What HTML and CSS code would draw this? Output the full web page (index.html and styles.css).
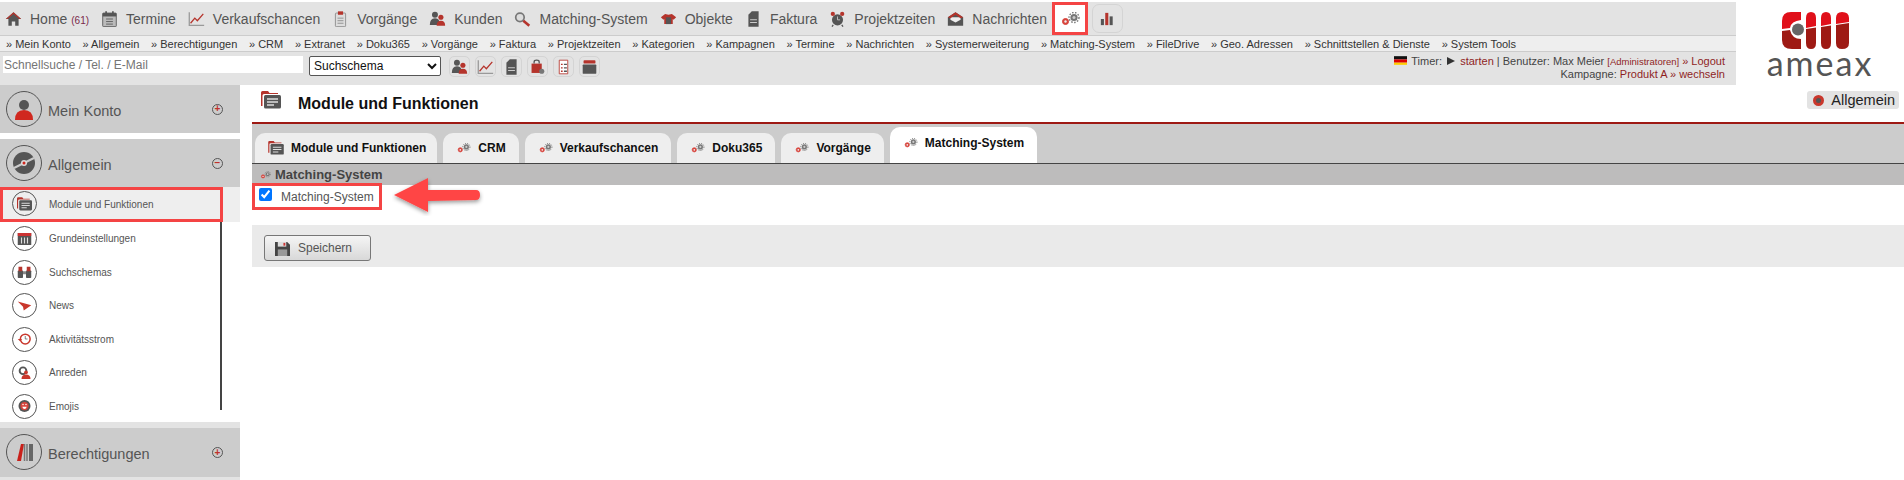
FILE: index.html
```html
<!DOCTYPE html>
<html>
<head>
    <title>Module und Funktionen</title>
    <meta charset="utf-8"/>
    <link rel="stylesheet" href="styles.css">
</head>
<body>
    <svg class="defs" width="0" height="0">
        <symbol id="gears" viewBox="0 0 20 14">
            <circle cx="5.5" cy="9.500" r="3" fill="#d8443c" stroke="#d8443c" stroke-width="1"/>
            <circle cx="5.5" cy="9.500" r="1.200" fill="#eee"/>
            <circle cx="14" cy="5.5" r="3.600" fill="#777"/>
            <circle cx="14" cy="5.5" r="5" fill="none" stroke="#777" stroke-width="1.400" stroke-dasharray="1.500 1.500"/>
            <circle cx="14" cy="5.5" r="1.500" fill="#ccc"/>
        </symbol>
        <symbol id="folder" viewBox="0 0 20 18">
            <path d="M0 3V1.500Q0 0 1.500 0H7L8.500 2H17V3H3Q1.500 3 1.500 4.500V15H0Z" fill="#b5342c"/>
            <rect x="3" y="4" width="17" height="13.500" rx="1.500" fill="#555"/>
            <path d="M6 8H17M6 11H17M6 14H13" stroke="#ddd" stroke-width="1.300"/>
        </symbol>
        <symbol id="people" viewBox="0 0 20 18">
            <circle cx="7" cy="4" r="3.500" fill="#555"/>
            <path d="M1 16Q1 8 7 8Q11 8 12 11V16Z" fill="#555"/>
            <circle cx="14" cy="7" r="3" fill="#b5342c"/>
            <path d="M9 17Q9 11 14 11Q19 11 19 17Z" fill="#b5342c"/>
        </symbol>
        <symbol id="chart" viewBox="0 0 20 18">
            <path d="M1.500 1V16.500H19" fill="none" stroke="#999" stroke-width="1.500"/>
            <path d="M3 14L8 8L11 11L18 3" fill="none" stroke="#b5342c" stroke-width="1.500"/>
        </symbol>
        <symbol id="invoice" viewBox="0 0 20 18">
            <path d="M4 4L8 0H16V18H4Z" fill="#555"/>
            <path d="M6 10H14M6 13H14" stroke="#ccc" stroke-width="1.200"/>
        </symbol>
        <symbol id="bag" viewBox="0 0 20 18">
            <path d="M3 5H15V16H3Z" fill="#b5342c"/>
            <path d="M6 5V3Q6 1 9 1Q12 1 12 3V5" fill="none" stroke="#555" stroke-width="1.500"/>
            <circle cx="15" cy="14" r="3" fill="#777"/>
        </symbol>
        <symbol id="doc" viewBox="0 0 20 18">
            <path d="M5 1H15V17H5Z" fill="#fff" stroke="#b5342c"/>
            <path d="M7 6H9M7 10H9M7 14H9" stroke="#b5342c" stroke-width="1.500"/>
            <path d="M10.500 6H14M10.500 10H14M10.500 14H14" stroke="#555" stroke-width="1.500"/>
        </symbol>
        <symbol id="box" viewBox="0 0 20 18">
            <rect x="3" y="1" width="14" height="4" rx="1" fill="#b5342c"/>
            <rect x="2" y="6" width="16" height="11" rx="1" fill="#555"/>
        </symbol>
        <symbol id="save" viewBox="0 0 16 16">
            <path d="M0 1H13L16 4V16H0Z" fill="#444"/>
            <rect x="3" y="1" width="9" height="5" fill="#ddd"/>
            <rect x="9" y="2" width="2" height="3" fill="#c33"/>
            <rect x="3" y="9" width="10" height="7" fill="#999"/>
        </symbol>
    </svg>

    <div class="top">
        <div class="top-left">
            <nav class="main-nav">
                <a class="nav-item">
                    <svg class="nav-icon" viewBox="0 0 20 18"><path d="M10 1L1 9H4V17H8V12H12V17H16V9H19Z" fill="#555"/><path d="M10 1L1 9H3L10 3L17 9H19Z" fill="#b5342c"/></svg>
                    <span>Home <small class="count">(61)</small></span>
                </a>
                <a class="nav-item">
                    <svg class="nav-icon" viewBox="0 0 20 18"><rect x="2" y="2" width="16" height="16" rx="1" fill="#bbb" stroke="#555"/><rect x="2" y="2" width="16" height="4" fill="#555"/><path d="M6 0V4M14 0V4" stroke="#555" stroke-width="2"/><path d="M6 9H14M6 12H14M6 15H14" stroke="#555"/></svg>
                    <span>Termine</span>
                </a>
                <a class="nav-item"><svg class="nav-icon"><use href="#chart"/></svg> <span>Verkaufschancen</span></a>
                <a class="nav-item">
                    <svg class="nav-icon" viewBox="0 0 20 18"><rect x="4" y="2" width="12" height="16" rx="1" fill="#ddd" stroke="#888"/><rect x="7" y="0" width="6" height="4" fill="#b5342c"/><path d="M6.500 8H13.500M6.500 11H13.500M6.500 14H13.500" stroke="#888"/></svg>
                    <span>Vorgänge</span>
                </a>
                <a class="nav-item"><svg class="nav-icon"><use href="#people"/></svg> <span>Kunden</span></a>
                <a class="nav-item">
                    <svg class="nav-icon" viewBox="0 0 20 18"><circle cx="7" cy="7" r="5" fill="#ddd" stroke="#777" stroke-width="2"/><path d="M11 11L18 17" stroke="#b5342c" stroke-width="3"/></svg>
                    <span>Matching-System</span>
                </a>
                <a class="nav-item">
                    <svg class="nav-icon" viewBox="0 0 20 18"><path d="M6 3L10 4L14 3L19 7L16 10L15 9V15H5V9L4 10L1 7Z" fill="#b5342c"/><path d="M7 7H13V15H7Z" fill="#555"/></svg>
                    <span>Objekte</span>
                </a>
                <a class="nav-item"><svg class="nav-icon"><use href="#invoice"/></svg> <span>Faktura</span></a>
                <a class="nav-item">
                    <svg class="nav-icon" viewBox="0 0 20 18"><circle cx="10" cy="10" r="6.500" fill="#555"/><circle cx="4.500" cy="3" r="2.500" fill="#b5342c"/><circle cx="15.500" cy="3" r="2.500" fill="#b5342c"/><path d="M5 16L3.500 18M15 16L16.500 18" stroke="#555" stroke-width="1.500"/><path d="M10 6V10H13" stroke="#ccc" fill="none"/></svg>
                    <span>Projektzeiten</span>
                </a>
                <a class="nav-item">
                    <svg class="nav-icon" viewBox="0 0 20 18"><path d="M1 7L10 1L19 7V17H1Z" fill="#555"/><path d="M4 7H16V10L10 13L4 10Z" fill="#eee"/><path d="M1 7L10 1L19 7L16 8L10 4L4 8Z" fill="#b5342c"/></svg>
                    <span>Nachrichten</span>
                </a>
                <a class="nav-button active"><svg class="gears-icon"><use href="#gears"/></svg></a>
                <a class="nav-button">
                    <svg class="gears-icon" viewBox="0 0 20 16"><rect x="3" y="8" width="3.500" height="7" fill="#555"/><rect x="8" y="1" width="3.500" height="14" fill="#b5342c"/><rect x="13" y="5" width="3.500" height="10" fill="#555"/></svg>
                </a>
            </nav>
            <nav class="sub-nav">
                <a>» Mein Konto</a>
                <a>» Allgemein</a>
                <a>» Berechtigungen</a>
                <a>» CRM</a>
                <a>» Extranet</a>
                <a>» Doku365</a>
                <a>» Vorgänge</a>
                <a>» Faktura</a>
                <a>» Projektzeiten</a>
                <a>» Kategorien</a>
                <a>» Kampagnen</a>
                <a>» Termine</a>
                <a>» Nachrichten</a>
                <a>» Systemerweiterung</a>
                <a>» Matching-System</a>
                <a>» FileDrive</a>
                <a>» Geo. Adressen</a>
                <a>» Schnittstellen &amp; Dienste</a>
                <a>» System Tools</a>
            </nav>
            <div class="tools">
                <input class="quick-search" type="text" placeholder="Schnellsuche / Tel. / E-Mail">
                <select class="schema">
                    <option>Suchschema</option>
                </select>
                <a class="tool-button"><svg><use href="#people"/></svg></a>
                <a class="tool-button"><svg><use href="#chart"/></svg></a>
                <a class="tool-button"><svg><use href="#invoice"/></svg></a>
                <a class="tool-button"><svg><use href="#bag"/></svg></a>
                <a class="tool-button"><svg><use href="#doc"/></svg></a>
                <a class="tool-button"><svg><use href="#box"/></svg></a>
                <div class="user-info">
                    <div>
                        <svg class="flag" viewBox="0 0 12 8"><rect width="12" height="3" fill="#111"/><rect y="3" width="12" height="3" fill="#d00"/><rect y="6" width="12" height="2" fill="#fc0"/></svg>
                        Timer: <span class="play"></span> <a>starten</a> | Benutzer: Max Meier <a class="role">[Administratoren]</a> <a>» Logout</a>
                    </div>
                    <div>Kampagne: <a>Produkt A</a> <a>» wechseln</a></div>
                </div>
            </div>
        </div>
        <div class="logo">
            <svg class="logo-mark" viewBox="0 0 67 37">
                <path d="M19 0H9Q0 0 0 9V17L8 16Q9 9 19 8Z" fill="#e0101a"/>
                <path d="M0 19L8 18Q10 27 19 27V37H10Q0 37 0 28Z" fill="#9e1a14"/>
                <circle cx="16" cy="17.500" r="6" fill="#666"/>
                <path d="M24 6Q24 0 29 0Q34 0 34 6V14L24 16Z" fill="#e0101a"/>
                <path d="M24 17L34 15.500V31Q34 37 29 37Q24 37 24 31Z" fill="#9e1a14"/>
                <path d="M39 6Q39 0 44 0Q49 0 49 6V12L39 14Z" fill="#e0101a"/>
                <path d="M39 15L49 13.500V31Q49 37 44 37Q39 37 39 31Z" fill="#9e1a14"/>
                <path d="M54 6Q54 0 60 0Q67 0 67 6V10L54 12Z" fill="#e0101a"/>
                <path d="M54 13L67 11V31Q67 37 60 37Q54 37 54 31Z" fill="#9e1a14"/>
            </svg>
            <div class="logo-text">ameax</div>
        </div>
    </div>

    <div class="page">
        <aside class="sidebar">
            <div class="side-head">
                <span class="head-circle">
                    <svg viewBox="0 0 24 24"><circle cx="12" cy="8" r="5" fill="#555"/><path d="M3 23Q3 13 12 13Q21 13 21 23Z" fill="#d0281f"/></svg>
                </span>
                Mein Konto
                <span class="toggle">+</span>
            </div>
            <div class="side-head open">
                <span class="head-circle">
                    <svg viewBox="0 0 24 24"><circle cx="12" cy="12" r="11" fill="#555"/><path d="M2 17L22 7" stroke="#ccc" stroke-width="2"/><circle cx="12" cy="12" r="3" fill="#ddd"/><circle cx="12" cy="12" r="1.500" fill="#d0281f"/></svg>
                </span>
                Allgemein
                <span class="toggle">−</span>
            </div>
            <ul class="side-list">
                <li class="active">
                    <span class="item-circle"><svg><use href="#folder"/></svg></span>
                    Module und Funktionen
                </li>
                <li>
                    <span class="item-circle">
                        <svg viewBox="0 0 20 18"><rect x="1" y="1" width="18" height="16" fill="#555"/><rect x="1" y="1" width="18" height="4" fill="#c33"/><path d="M6 7V15M10 7V15M14 7V15" stroke="#ddd" stroke-width="1.500"/></svg>
                    </span>
                    Grundeinstellungen
                </li>
                <li>
                    <span class="item-circle">
                        <svg viewBox="0 0 20 18"><rect x="1" y="7" width="7" height="10" rx="1" fill="#555"/><rect x="12" y="7" width="7" height="10" rx="1" fill="#555"/><rect x="2" y="2" width="5" height="6" fill="#b5342c"/><rect x="13" y="2" width="5" height="6" fill="#b5342c"/><rect x="8" y="8" width="4" height="4" fill="#888"/></svg>
                    </span>
                    Suchschemas
                </li>
                <li>
                    <span class="item-circle">
                        <svg viewBox="0 0 20 18"><path d="M1 3L19 8L9 15L8 10Z" fill="#c9372c"/></svg>
                    </span>
                    News
                </li>
                <li>
                    <span class="item-circle">
                        <svg viewBox="0 0 20 18"><circle cx="11" cy="9" r="6.500" fill="none" stroke="#c9372c" stroke-width="2"/><path d="M11 5V9H14" stroke="#555" fill="none"/><path d="M1 9H7L4 12Z" fill="#c9372c"/></svg>
                    </span>
                    Aktivitätsstrom
                </li>
                <li>
                    <span class="item-circle">
                        <svg viewBox="0 0 20 18"><circle cx="8" cy="6" r="4.500" fill="none" stroke="#555" stroke-width="2.500"/><circle cx="12" cy="8" r="2.500" fill="#c9372c"/><path d="M6 17Q6 11 12 11Q18 11 18 17Z" fill="#c9372c"/></svg>
                    </span>
                    Anreden
                </li>
                <li>
                    <span class="item-circle">
                        <svg viewBox="0 0 20 18"><circle cx="10" cy="9" r="8" fill="#555"/><circle cx="10" cy="9" r="5.500" fill="#d8443c"/><path d="M7 10H13Q12 13 10 13Q8 13 7 10Z" fill="#fff"/><circle cx="8" cy="7" r="1" fill="#fff"/><circle cx="12" cy="7" r="1" fill="#fff"/></svg>
                    </span>
                    Emojis
                </li>
            </ul>
            <div class="side-head last">
                <span class="head-circle">
                    <svg viewBox="0 0 24 24"><path d="M5 21L9 4H12L9 21Z" fill="#c9201a"/><path d="M12.500 4V21M15 4V21" stroke="#777" stroke-width="1.500"/><rect x="17" y="4" width="4" height="17" fill="#666"/></svg>
                </span>
                Berechtigungen
                <span class="toggle">+</span>
            </div>
        </aside>

        <main class="content">
            <span class="area-badge"><span class="badge-dot"></span>Allgemein</span>
            <header class="title-bar">
                <svg class="title-icon"><use href="#folder"/></svg>
                <h1>Module und Funktionen</h1>
            </header>
            <div class="tabs">
                <a class="tab"><svg class="tab-folder"><use href="#folder"/></svg> Module und Funktionen</a>
                <a class="tab"><svg class="tab-icon"><use href="#gears"/></svg> CRM</a>
                <a class="tab"><svg class="tab-icon"><use href="#gears"/></svg> Verkaufschancen</a>
                <a class="tab"><svg class="tab-icon"><use href="#gears"/></svg> Doku365</a>
                <a class="tab"><svg class="tab-icon"><use href="#gears"/></svg> Vorgänge</a>
                <a class="tab current"><svg class="tab-icon"><use href="#gears"/></svg> Matching-System</a>
            </div>
            <h2 class="section-head"><svg class="section-icon"><use href="#gears"/></svg> Matching-System</h2>
            <div class="option-row">
                <label class="option">
                    <input type="checkbox" checked>
                    Matching-System
                </label>
            </div>
            <div class="save-bar">
                <button class="save"><svg><use href="#save"/></svg> Speichern</button>
            </div>
            <svg class="arrow" viewBox="0 0 92 40">
                <defs><filter id="shadow"><feDropShadow dx="0" dy="2" stdDeviation="2" flood-opacity="0.4"/></filter></defs>
                <path d="M2 18L36 1V13H84Q88 13 88 18Q88 23 84 23L36 24V35Z" fill="#ff4444" filter="url(#shadow)"/>
            </svg>
        </main>
    </div>
</body>
</html>
```

FILE: styles.css
```css
* {
    margin: 0;
    padding: 0;
    box-sizing: border-box;
}

html {
    width: 100%;
}

body {
    width: 100%;
    height: 480px;
    overflow: hidden;

    background-color: white;
    color: #444;
    font-family: 'Liberation Sans', Arial, sans-serif;
}

a {
    color: inherit;
}

.defs {
    position: absolute;
}

/* top */

.top {
    height: 85px;
    padding-top: 2px;

    display: flex;
}

.top-left {
    width: 1736px;

    background-color: #e3e3e3;
}

.main-nav {
    height: 33px;
    padding-left: 5px;

    display: flex;
    align-items: center;
    gap: 12px;

    color: #555;
    font-size: 14px;
}

.nav-item {
    display: flex;
    align-items: center;
    gap: 8px;
    white-space: nowrap;
}

.nav-item .count {
    color: #7a2a4a;
    font-size: 10px;
}

.nav-icon {
    width: 17px;
    height: 16px;
}

.nav-button {
    width: 31px;
    height: 29px;
    margin-left: -8px;

    display: flex;
    justify-content: center;
    align-items: center;

    border: 1px solid #d4d4d4;
    border-radius: 7px;
}

.nav-button.active {
    width: 36px;
    height: 33px;
    margin-left: -7px;

    background-color: white;
    border: 3px solid #f44444;
    border-radius: 0;
}

.gears-icon {
    width: 20px;
    height: 14px;
}

.sub-nav {
    height: 17px;
    padding-left: 6px;

    display: flex;
    align-items: center;
    gap: 11.700px;

    background-color: #eeeeee;
    border-top: 1px solid #cccccc;
    border-bottom: 1px solid #cccccc;

    color: #333;
    font-size: 11px;
    white-space: nowrap;
}

.tools {
    padding: 4px 11px 0 3px;

    display: flex;
    align-items: flex-start;
}

.quick-search {
    width: 300px;
    height: 17px;
    padding-left: 1px;

    background-color: white;
    border: none;

    font-family: inherit;
    font-size: 12px;
}

.schema {
    width: 132px;
    height: 20px;
    margin: 0 8px 0 6px;

    background-color: white;
    border: 1px solid #555;
    border-radius: 2px;

    color: #111;
    font-family: inherit;
    font-size: 12px;
}

.tool-button {
    width: 21px;
    height: 21px;
    margin-right: 5px;

    display: flex;
    justify-content: center;
    align-items: center;

    border: 1px solid #d4d4d4;
    border-radius: 5px;
}

.tool-button svg {
    width: 17px;
    height: 16px;
}

.user-info {
    margin-left: auto;
    margin-top: -1px;

    color: #444;
    font-size: 11px;
    line-height: 12px;
    text-align: right;
}

.user-info a {
    color: #8f1f1f;
}

.user-info .role {
    font-size: 9.500px;
}

.flag {
    width: 13px;
    height: 9px;
    margin-right: 1px;
}

.play {
    width: 0;
    height: 0;
    margin: 0 2px;

    display: inline-block;

    border-left: 8px solid #333;
    border-top: 4px solid transparent;
    border-bottom: 4px solid transparent;
}

.logo {
    width: 168px;
    padding-top: 10px;

    display: flex;
    flex-direction: column;
    align-items: center;
}

.logo-mark {
    width: 67px;
    height: 37px;
    margin-left: -9px;
}

.logo-text {
    color: #555;
    font-family: 'Lato', sans-serif;
    font-size: 34px;
    line-height: 28px;
    letter-spacing: 2px;
}

/* sidebar */

.page {
    display: flex;
}

.sidebar {
    width: 240px;
    flex-shrink: 0;
}

.side-head {
    height: 48px;
    padding: 3px 14px 0 48px;

    display: flex;
    align-items: center;

    background-color: #cccccc;
    position: relative;

    color: #555;
    font-size: 14.500px;
}

.side-head.open {
    margin-top: 6px;
}

.side-head.last {
    height: 49px;
    margin-top: 18px;

    box-shadow: 0 -6px 0 #e3e3e3, 0 6px 0 #e3e3e3;
}

.head-circle {
    width: 36px;
    height: 36px;

    display: flex;
    justify-content: center;
    align-items: center;

    position: absolute;
    left: 6px;
    top: 6px;

    border: 1px solid #555;
    border-radius: 50%;
}

.head-circle svg {
    width: 24px;
    height: 24px;
}

.toggle {
    width: 11px;
    height: 11px;
    margin-left: auto;
    margin-right: 3px;
    margin-top: -3px;

    display: flex;
    justify-content: center;
    align-items: center;

    border: 1.500px solid #555;
    border-radius: 50%;

    color: #c0302a;
    font-size: 10px;
    font-weight: bold;
    line-height: 1;
}

.side-list {
    width: 222px;
    height: 223px;

    border-right: 2px solid #444;
    list-style: none;
}

.side-list li {
    height: 33.500px;
    padding-left: 49px;

    display: flex;
    align-items: center;
    position: relative;

    color: #555;
    font-size: 10px;
}

.side-list li.active {
    width: 240px;
    height: 35px;

    background-color: #eeeeee;
}

.side-list li.active::after {
    content: '';
    width: 223px;
    height: 35px;
    box-sizing: border-box;

    position: absolute;
    left: 0;
    top: 0;

    border: 3px solid #f44444;
}

.item-circle {
    width: 25px;
    height: 25px;

    display: flex;
    justify-content: center;
    align-items: center;

    position: absolute;
    left: 12px;
    top: 4px;

    border: 1px solid #555;
    border-radius: 50%;
}

.item-circle svg {
    width: 15px;
    height: 14px;
}

/* content */

.content {
    width: 1652px;
    margin-left: 12px;

    position: relative;
}

.area-badge {
    height: 18px;
    padding: 0 4px 0 6px;

    display: flex;
    align-items: center;
    gap: 7px;

    position: absolute;
    right: 5px;
    top: 6px;

    background-color: #e3e3e3;
    border-radius: 3px;

    color: #222;
    font-size: 14.500px;
}

.badge-dot {
    width: 11px;
    height: 11px;

    background-color: #555;
    border: 3px solid #c9372c;
    border-radius: 50%;
}

.title-bar {
    height: 39px;
    padding-left: 9px;

    display: flex;
    align-items: center;
    gap: 17px;

    border-bottom: 2px solid #9e1a14;
}

.title-icon {
    width: 20px;
    height: 18px;
    margin-top: -8px;
}

.title-bar h1 {
    color: #111;
    font-size: 16px;
}

.tabs {
    height: 40px;
    padding-left: 3px;

    display: flex;
    align-items: flex-end;
    gap: 6px;

    background-color: #cccccc;
    border-bottom: 1px solid #444;
}

.tab {
    height: 30px;
    padding: 0 13px;

    display: flex;
    align-items: center;
    gap: 7px;

    background-color: #eeeeee;
    border-radius: 10px 10px 0 0;

    color: #111;
    font-size: 12px;
    font-weight: bold;
}

.tab:first-child {
    padding-right: 11px;
}

.tab.current {
    height: 36px;
    padding-bottom: 4px;

    background-color: white;
}

.tab-folder {
    width: 16px;
    height: 14px;
}

.tab-icon {
    width: 15px;
    height: 10px;
}

.section-head {
    height: 21px;
    padding-left: 8px;

    display: flex;
    align-items: center;
    gap: 4px;

    background-color: #bdbcbc;

    color: #444;
    font-size: 13px;
}

.section-icon {
    width: 11px;
    height: 8px;
}

.option-row {
    height: 42px;
    margin-top: -2px;
}

.option {
    width: 130px;
    height: 27px;
    padding-left: 4px;

    display: flex;
    align-items: center;
    gap: 9px;

    background-color: white;
    border: 3px solid #f44444;

    color: #555;
    font-size: 12px;
}

.option input {
    width: 13px;
    height: 13px;
    margin-top: -5px;
}

.save-bar {
    height: 42px;
    padding: 10px 12px;

    background-color: #eaeaea;
}

.save {
    width: 107px;
    height: 26px;
    padding-left: 10px;

    display: flex;
    align-items: center;
    gap: 8px;

    background: linear-gradient(#f5f5f5, #d8d8d8);
    border: 1px solid #777;
    border-radius: 3px;

    color: #555;
    font-family: inherit;
    font-size: 12px;
}

.save svg {
    width: 15px;
    height: 15px;
}

/* annotation */

.arrow {
    width: 92px;
    height: 40px;

    position: absolute;
    left: 140px;
    top: 92px;
}
```
